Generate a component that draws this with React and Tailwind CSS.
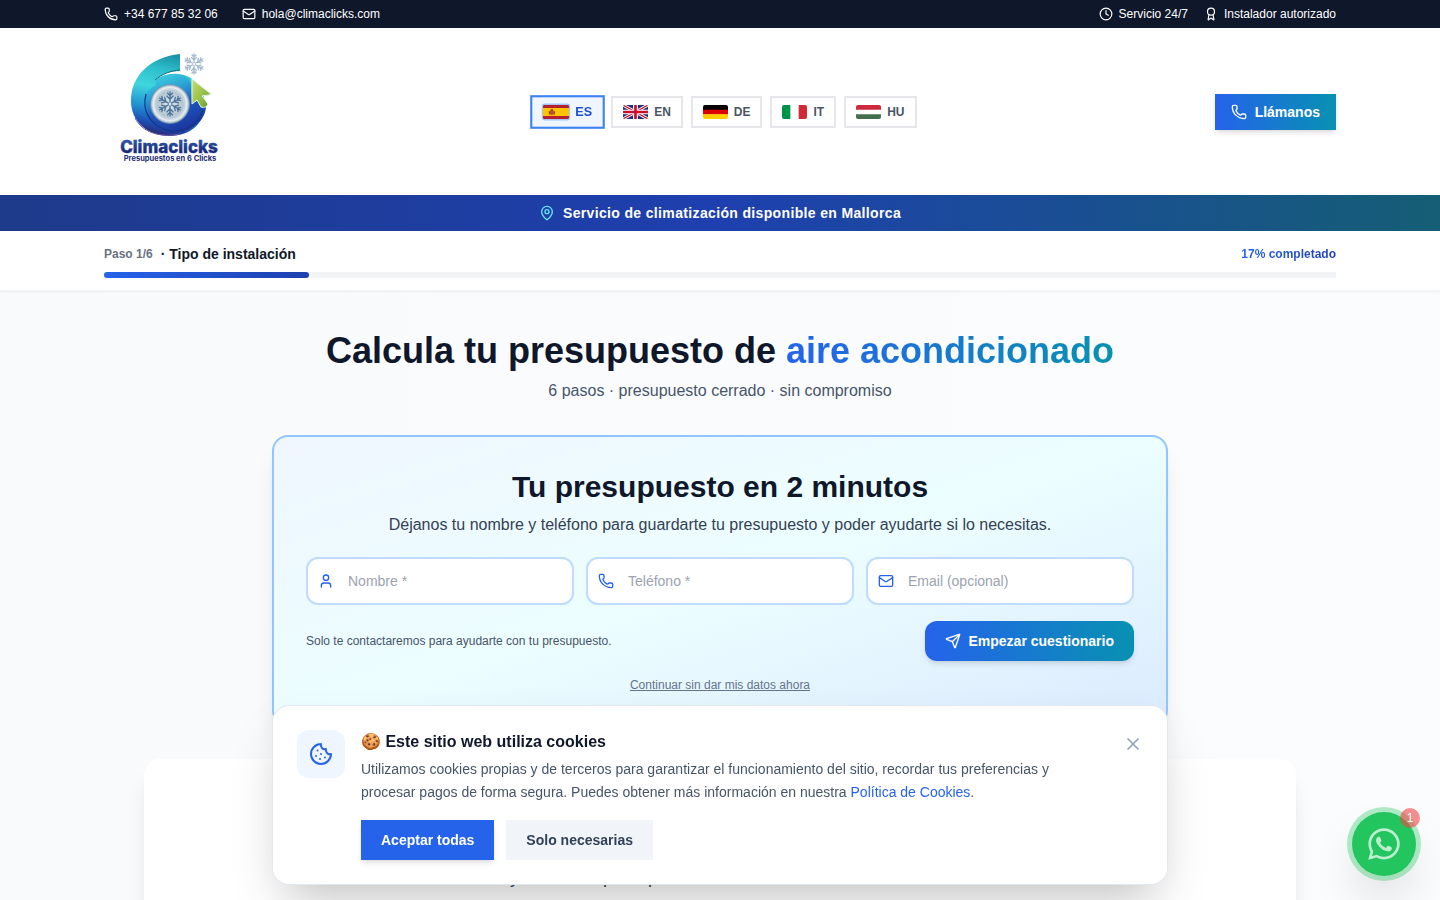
import { useState } from "react";
import { Phone, Mail, Clock, Award, MapPin, User, Send, Cookie, X } from "lucide-react";
import { FaWhatsapp } from "react-icons/fa";

function Snowflake({ cx, cy, r, color, width }) {
  return (
    <g stroke={color} strokeWidth={width} strokeLinecap="round" fill="none">
      {[0, 60, 120, 180, 240, 300].map((angle) => (
        <g key={angle} transform={`translate(${cx} ${cy}) rotate(${angle}) scale(${r / 10})`}>
          <path d="M0 -1.5V-10M0 -4L-2.6 -6.6M0 -4L2.6 -6.6M0 -7L-2 -9M0 -7L2 -9" />
        </g>
      ))}
    </g>
  );
}

function Logo() {
  return (
    <a href="#inicio" aria-label="Climaclicks" className="block w-[130px]">
      <svg viewBox="0 0 130 135" className="block h-[135px] w-[130px]">
        <defs>
          <linearGradient id="ring" x1="0.65" y1="0" x2="0.45" y2="1">
            <stop offset="0" stopColor="#168ca6" />
            <stop offset="0.22" stopColor="#2dbecb" />
            <stop offset="0.45" stopColor="#3fd6de" />
            <stop offset="0.7" stopColor="#2292d2" />
            <stop offset="0.88" stopColor="#1d4db4" />
            <stop offset="1" stopColor="#2b2a72" />
          </linearGradient>
          <linearGradient id="bowl" x1="0.2" y1="0" x2="0.6" y2="1">
            <stop offset="0" stopColor="#3fd2de" />
            <stop offset="0.3" stopColor="#2aa5d6" />
            <stop offset="0.6" stopColor="#1d57bd" />
            <stop offset="1" stopColor="#1b329b" />
          </linearGradient>
          <radialGradient id="disc">
            <stop offset="0" stopColor="#dbe6ee" />
            <stop offset="0.65" stopColor="#b4c5d1" />
            <stop offset="0.88" stopColor="#dce5ea" />
            <stop offset="1" stopColor="#8ea6b8" />
          </radialGradient>
          <linearGradient id="pointer" x1="0" y1="0" x2="1" y2="1">
            <stop offset="0" stopColor="#c9df6c" />
            <stop offset="0.6" stopColor="#94bd45" />
            <stop offset="1" stopColor="#5f9232" />
          </linearGradient>
          <linearGradient id="word" x1="0" y1="0" x2="0" y2="1">
            <stop offset="0" stopColor="#2d6dba" />
            <stop offset="0.7" stopColor="#1b2a78" />
          </linearGradient>
        </defs>
        <path d="M76 10C47 13 27 31 27 57C27 77 43 92 66 92C87 92 101 78 101 61C101 43 88 30 72 30C64 30 57 32 51 36C57 30 66 27 76 27Z" fill="url(#ring)" />
        <path d="M51 36C58 31 66 29 74 30C80 31 85 35 87 40L88 58L94 57L98 63L102 62C102 77 86 89 68 89C50 86 40 74 40 59C41 50 45 44 52 41Z" fill="url(#bowl)" />
        <path d="M51 36C58 30 66 27 76 26" stroke="#12697f" strokeWidth="1" fill="none" />
        <path d="M42 50C37 68 48 84 67 87C83 88 95 79 99 66" stroke="#153683" strokeWidth="1.2" fill="none" />
        <path d="M31 74C38 88 55 94 76 90" stroke="#6a58aa" strokeWidth="1" fill="none" />
        <circle cx="66" cy="60" r="19.5" fill="url(#disc)" stroke="#6e8eae" strokeWidth="0.8" />
        <circle cx="66" cy="60" r="16.5" fill="none" stroke="#edf3f6" strokeWidth="0.8" />
        <Snowflake cx={66} cy={60} r={12} color="#4d7299" width={1.1} />
        <Snowflake cx={90} cy={20} r={10} color="#a5bacd" width={1.3} />
        <path d="M88 35L107 50C104 52 101 51 98 52L104 60C103 63 100 64 97 63L93 56L88 60Z" fill="url(#pointer)" stroke="#e6f5ea" strokeWidth="1" strokeLinejoin="round" />
        <text x="65" y="109" textAnchor="middle" fill="url(#word)" stroke="#1d3a8c" strokeWidth="0.4" fontFamily="Inter, sans-serif" fontWeight="800" fontSize="17">Climaclicks</text>
        <text x="66" y="117" textAnchor="middle" fill="#1d2c72" fontFamily="Inter, sans-serif" fontWeight="700" fontSize="7.5">Presupuestos en 6 Clicks</text>
      </svg>
    </a>
  );
}

function Flag({ code }) {
  return (
    <svg viewBox="0 0 24 14" preserveAspectRatio="none" className="block h-3.5 w-[25px] overflow-hidden rounded-xs" aria-hidden="true">
      {code === "ES" && (
        <>
          <path fill="#b51f2e" d="M0 0h24v14H0z" />
          <path fill="#ffc400" d="M0 3.2h24v7.6H0z" />
          <path fill="#b5532a" d="M6.5 5.5h3.6v3.5l-1.8 1-1.8-1z" />
          <path fill="#8f2c25" d="M7.3 4.3h2v1.4h-2zM5.5 6.4h1v3h-1zM10 6.4h1v3h-1z" />
        </>
      )}
      {code === "EN" && (
        <>
          <path fill="#1f2f6f" d="M0 0h24v14H0z" />
          <path stroke="#fff" strokeWidth="3" d="M0 0L24 14M24 0L0 14" />
          <path stroke="#c8102e" strokeWidth="1.2" d="M0 0L24 14M24 0L0 14" />
          <path stroke="#fff" strokeWidth="4.6" d="M12 0v14M0 7h24" />
          <path stroke="#c8102e" strokeWidth="2.6" d="M12 0v14M0 7h24" />
        </>
      )}
      {code === "DE" && (
        <>
          <path fill="#000" d="M0 0h24v5H0z" />
          <path fill="#d00" d="M0 4.7h24v4.8H0z" />
          <path fill="#ffce00" d="M0 9.3h24V14H0z" />
        </>
      )}
      {code === "IT" && (
        <>
          <path fill="#fff" d="M0 0h24v14H0z" />
          <path fill="#009246" d="M0 0h8v14H0z" />
          <path fill="#ce2b37" d="M16 0h8v14h-8z" />
        </>
      )}
      {code === "HU" && (
        <>
          <path fill="#fff" d="M0 0h24v14H0z" />
          <path fill="#cd2a3e" d="M0 0h24v4.7H0z" />
          <path fill="#436f4d" d="M0 9.3h24V14H0z" />
        </>
      )}
    </svg>
  );
}

function LanguageButton({ code, active, onSelect }) {
  return (
    <button
      type="button"
      aria-pressed={active}
      onClick={() => onSelect(code)}
      className={
        active
          ? "flex h-8 scale-105 items-center gap-1.5 border-2 border-[#3b82f6] bg-[#eff6ff] px-2.5 text-xs font-bold text-[#1d4ed8]"
          : "flex h-8 items-center gap-1.5 border-2 border-gray-200 bg-white px-2.5 text-xs font-bold text-gray-600"
      }
    >
      <span className={active ? "rounded-xs ring-1 ring-[#93c5fd]" : "rounded-xs"}>
        <Flag code={code} />
      </span>
      {code}
    </button>
  );
}

function Field({ icon: Icon, id, label, type }) {
  return (
    <label htmlFor={id} className="flex h-12 min-w-0 items-center gap-3.5 rounded-xl border-2 border-[#bfdbfe] bg-white px-2.5">
      <Icon className="size-4 shrink-0 text-[#2563eb]" aria-hidden="true" />
      <input id={id} type={type} aria-label={label} placeholder={label} className="min-w-0 flex-1 bg-transparent text-sm text-gray-900 outline-none placeholder:text-[#9ca3af]" />
    </label>
  );
}

function TopBar() {
  return (
    <div className="bg-slate-900 text-xs text-white">
      <div className="mx-auto flex h-7 max-w-7xl items-center justify-between px-6">
        <div className="flex items-center gap-6">
          <a href="tel:+34677853206" className="flex items-center gap-1.5"><Phone className="size-3.5" />+34 677 85 32 06</a>
          <a href="mailto:hola@climaclicks.com" className="flex items-center gap-1.5"><Mail className="size-3.5" />hola@climaclicks.com</a>
        </div>
        <div className="flex items-center gap-4">
          <span className="flex items-center gap-1.5"><Clock className="size-3.5" />Servicio 24/7</span>
          <span className="flex items-center gap-1.5"><Award className="size-3.5" />Instalador autorizado</span>
        </div>
      </div>
    </div>
  );
}

function CookieBanner({ onClose }) {
  return (
    <section aria-label="Cookies" className="fixed inset-x-4 bottom-4 z-40 mx-auto flex max-w-[894px] items-start gap-4 rounded-2xl bg-white p-6 shadow-2xl ring-1 ring-slate-200">
      <div className="flex size-12 shrink-0 items-center justify-center rounded-xl bg-[#eff6ff]">
        <Cookie className="size-6 text-[#2563eb]" />
      </div>
      <div className="min-w-0 flex-1">
        <h2 className="text-base font-bold text-slate-900">🍪 Este sitio web utiliza cookies</h2>
        <p className="mt-1 max-w-[720px] text-sm/[23px] text-[#475569]">
          Utilizamos cookies propias y de terceros para garantizar el funcionamiento del sitio, recordar tus preferencias y procesar pagos de forma segura. Puedes obtener más información en nuestra{" "}
          <a href="#cookies" className="text-[#2563eb]">Política de Cookies</a>.
        </p>
        <div className="mt-4 flex gap-3">
          <button type="button" onClick={onClose} className="h-10 bg-[#2563eb] px-5 text-sm font-bold text-white shadow-md">Aceptar todas</button>
          <button type="button" onClick={onClose} className="h-10 bg-slate-100 px-5 text-sm font-bold text-slate-700">Solo necesarias</button>
        </div>
      </div>
      <button type="button" aria-label="Cerrar" onClick={onClose} className="-mr-1 p-1 text-slate-400"><X className="size-5" /></button>
    </section>
  );
}

export default function App() {
  const [language, setLanguage] = useState("ES");
  const [cookiesOpen, setCookiesOpen] = useState(true);
  return (
    <div className="h-screen overflow-hidden bg-linear-to-r/srgb from-[#f9fafc] to-[#fbfcfe] font-['Liberation_Sans',Arial,sans-serif]">
      <TopBar />
      <header className="bg-white">
        <div className="mx-auto flex max-w-7xl items-center justify-between px-6 py-4">
          <Logo />
          <nav aria-label="Idioma" className="flex gap-2">
            {["ES", "EN", "DE", "IT", "HU"].map((code) => (
              <LanguageButton key={code} code={code} active={code === language} onSelect={setLanguage} />
            ))}
          </nav>
          <a href="tel:+34677853206" className="flex h-9 items-center gap-2 bg-linear-to-r/srgb from-[#2563eb] to-[#0891b2] px-4 text-sm font-bold text-white shadow-md">
            <Phone className="size-4" />Llámanos
          </a>
        </div>
      </header>
      <div className="flex h-9 items-center justify-center gap-2 bg-linear-to-r/srgb from-[#1e3a8a] via-[#1e40af] to-[#155e75] text-sm font-bold tracking-wide text-white">
        <MapPin className="size-4 text-[#67e8f9]" />Servicio de climatización disponible en Mallorca
      </div>
      <div className="border-b border-gray-100 bg-white shadow-xs">
        <div className="mx-auto max-w-7xl px-6 py-3">
          <div className="flex h-[21px] items-center justify-between">
            <p className="flex items-center gap-2 text-sm/[22px] font-bold text-gray-900">
              <span className="text-xs text-gray-500">Paso 1/6</span>· Tipo de instalación
            </p>
            <span className="bg-linear-to-r/srgb from-[#2563eb] to-[#1e40af] bg-clip-text text-xs font-bold text-transparent">17% completado</span>
          </div>
          <div className="mt-2 h-1.5 bg-gray-100">
            <div className="h-1.5 w-1/6 rounded-full bg-linear-to-r/srgb from-[#2563eb] to-[#1e40af]" />
          </div>
        </div>
      </div>
      <main className="mx-auto max-w-6xl pt-10">
        <h1 className="text-center text-4xl font-bold text-slate-900">
          Calcula tu presupuesto de{" "}
          <span className="bg-linear-to-r/srgb from-[#2563eb] to-[#0891b2] bg-clip-text text-transparent">aire acondicionado</span>
        </h1>
        <p className="mt-2 text-center text-base text-[#475569]">6 pasos · presupuesto cerrado · sin compromiso</p>
        <form onSubmit={(event) => event.preventDefault()} className="mx-auto mt-8 max-w-4xl rounded-2xl border-2 border-[#93c5fd] bg-linear-to-br/srgb from-[#eff6ff] via-[#ecfeff] to-[#dbeafe] p-8 shadow-xl">
          <h2 className="text-center text-3xl font-bold text-slate-900">Tu presupuesto en 2 minutos</h2>
          <p className="mt-2 text-center text-base text-[#334155]">Déjanos tu nombre y teléfono para guardarte tu presupuesto y poder ayudarte si lo necesitas.</p>
          <div className="mt-5 grid grid-cols-3 gap-3">
            <Field icon={User} id="nombre" label="Nombre *" type="text" />
            <Field icon={Phone} id="telefono" label="Teléfono *" type="tel" />
            <Field icon={Mail} id="email" label="Email (opcional)" type="email" />
          </div>
          <div className="mt-4 flex items-center justify-between">
            <p className="text-xs text-[#475569]">Solo te contactaremos para ayudarte con tu presupuesto.</p>
            <button type="submit" className="flex h-10 items-center gap-2 rounded-xl bg-linear-to-r/srgb from-[#2563eb] to-[#0891b2] px-5 text-sm font-bold text-white shadow-md">
              <Send className="size-4" />Empezar cuestionario
            </button>
          </div>
          <div className="mt-4 flex justify-center">
            <button type="button" className="text-xs text-[#64748b] underline">Continuar sin dar mis datos ahora</button>
          </div>
        </form>
        <section className="mt-8 rounded-2xl bg-white px-8 pt-26 pb-12 text-center shadow-xl">
          <p className="text-lg text-gray-700">Indica la instalación y recibe un presupuesto cerrado en solo unos minutos desde tu domicilio</p>
        </section>
      </main>
      {cookiesOpen && <CookieBanner onClose={() => setCookiesOpen(false)} />}
      <a href="https://wa.me/34677853206" aria-label="WhatsApp" className="fixed right-6 bottom-6 z-50 flex size-16 items-center justify-center rounded-full bg-[#22c55e] text-white/70 shadow-2xl ring-5 ring-[#22c55e]/35">
        <FaWhatsapp className="size-9" />
        <span className="absolute -top-1 -right-1 flex size-5 items-center justify-center rounded-full bg-[#ef4444]/60 text-xs text-white">1</span>
      </a>
    </div>
  );
}
